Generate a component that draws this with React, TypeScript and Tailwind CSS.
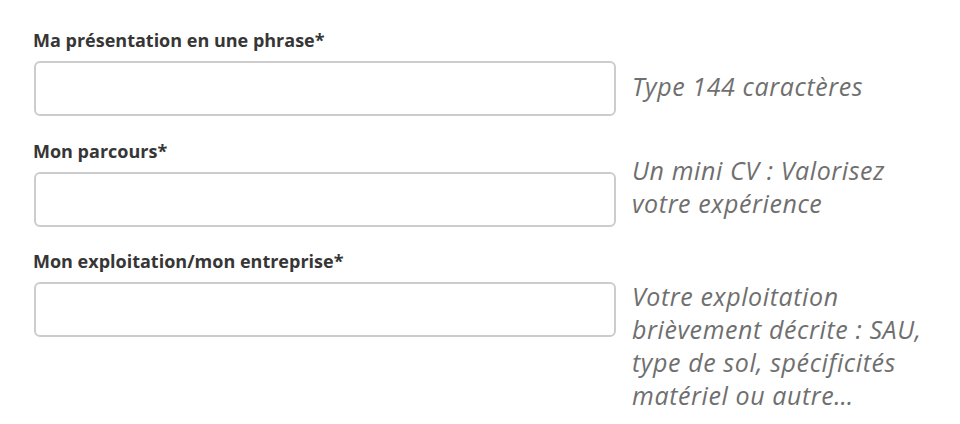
const fields = [
  {
    id: "presentation",
    label: "Ma présentation en une phrase*",
    hint: ["Type 144 caractères"],
    hintTop: "mt-[41px]",
    rowTop: "mt-[29px]",
  },
  {
    id: "parcours",
    label: "Mon parcours*",
    hint: ["Un mini CV : Valorisez", "votre expérience"],
    hintTop: "mt-[14px]",
    rowTop: "mt-[24px]",
  },
  {
    id: "exploitation",
    label: "Mon exploitation/mon entreprise*",
    hint: [
      "Votre exploitation",
      "brièvement décrite : SAU,",
      "type de sol, spécificités",
      "matériel ou autre…",
    ],
    hintTop: "mt-[30px]",
    rowTop: "mt-[23px]",
  },
];

const App = () => {
  return (
    <div className="w-[960px] h-[424px] bg-white overflow-hidden">
      <div className="flex flex-col pl-[34px]">
        {fields.map((field) => (
          <div key={field.id} className={`flex items-start ${field.rowTop}`}>
            <div className="flex flex-col w-[582px] shrink-0">
              <label
                htmlFor={field.id}
                className="-ml-px mb-[10px] text-[18px] leading-[22px] font-bold text-[#363636] font-['Open_Sans',sans-serif]"
              >
                {field.label}
              </label>
              <input
                id={field.id}
                type="text"
                className="h-[55px] w-full rounded-[6px] border-2 border-[#cccccc] bg-white px-3 outline-none"
              />
            </div>
            <p
              className={`ml-4 whitespace-nowrap text-[25px] leading-[33px] italic tracking-[0.6px] text-[#6f6f6f] font-['Open_Sans',sans-serif] ${field.hintTop}`}
            >
              {field.hint.map((line, i) => (
                <span key={i} className="block">
                  {line}
                </span>
              ))}
            </p>
          </div>
        ))}
      </div>
    </div>
  );
};

export default App;
